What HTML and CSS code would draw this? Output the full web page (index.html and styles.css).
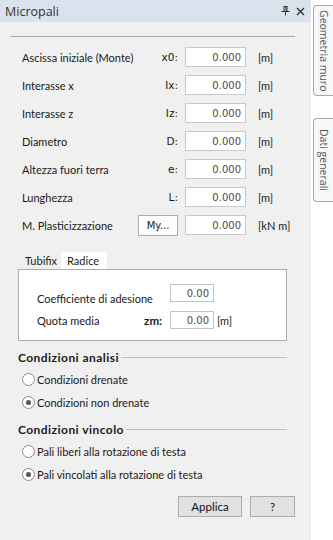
FILE: index.html
```html
<!DOCTYPE html>
<html lang="it">
<head>
    <meta charset="UTF-8">
    <meta name="viewport" content="width=device-width, initial-scale=1.0">
    <title>Micropali</title>
    <link rel="stylesheet" href="styles.css">
</head>
<body>
    <div class="app">
        <div class="panel">
            <div class="titlebar">
                <span class="title">Micropali</span>
                <span class="tb-icons">
                    <!-- puntina -->
                    <svg width="9" height="10" viewBox="0 0 9 10">
                        <path d="M2.5 0.5h4M3 0.5v5M6 0.5v5M5 0.5v5M0.5 5.5h8M4.5 5.5v4" stroke="#333" stroke-width="1" fill="none"/>
                    </svg>
                    <!-- chiudi -->
                    <svg width="9" height="9" viewBox="0 0 9 9">
                        <path d="M1 1L8 8M8 1L1 8" stroke="#333" stroke-width="1.4" fill="none"/>
                    </svg>
                </span>
            </div>
            <div class="body">
                <div class="sep"></div>

                <div class="fields">
                    <span class="lbl">Ascissa iniziale (Monte)</span>
                    <span class="code">x0:</span>
                    <input class="num" type="text" value="0.000" readonly>
                    <span class="unit">[m]</span>

                    <span class="lbl">Interasse x</span>
                    <span class="code">Ix:</span>
                    <input class="num" type="text" value="0.000" readonly>
                    <span class="unit">[m]</span>

                    <span class="lbl">Interasse z</span>
                    <span class="code">Iz:</span>
                    <input class="num" type="text" value="0.000" readonly>
                    <span class="unit">[m]</span>

                    <span class="lbl">Diametro</span>
                    <span class="code">D:</span>
                    <input class="num" type="text" value="0.000" readonly>
                    <span class="unit">[m]</span>

                    <span class="lbl">Altezza fuori terra</span>
                    <span class="code">e:</span>
                    <input class="num" type="text" value="0.000" readonly>
                    <span class="unit">[m]</span>

                    <span class="lbl">Lunghezza</span>
                    <span class="code">L:</span>
                    <input class="num" type="text" value="0.000" readonly>
                    <span class="unit">[m]</span>

                    <span class="lbl">M. Plasticizzazione</span>
                    <span class="code"><button type="button" class="btn-my">My...</button></span>
                    <input class="num" type="text" value="0.000" readonly>
                    <span class="unit">[kN m]</span>
                </div>

                <div class="tabs">
                    <div class="tab-strip">
                        <span class="tab">Tubifix</span>
                        <span class="tab active">Radice</span>
                    </div>
                    <div class="tab-page">
                        <span class="lbl low">Coefficiente di adesione</span>
                        <span class="code"></span>
                        <input class="num small" type="text" value="0.00" readonly>
                        <span class="unit"></span>

                        <span class="lbl">Quota media</span>
                        <span class="code bold">zm:</span>
                        <input class="num small" type="text" value="0.00" readonly>
                        <span class="unit">[m]</span>
                    </div>
                </div>

                <div class="group">
                    <div class="group-title">Condizioni analisi</div>
                    <label class="radio"><span class="dot"></span>Condizioni drenate</label>
                    <label class="radio"><span class="dot on"></span>Condizioni non drenate</label>
                </div>

                <div class="group second">
                    <div class="group-title">Condizioni vincolo</div>
                    <label class="radio"><span class="dot"></span>Pali liberi alla rotazione di testa</label>
                    <label class="radio"><span class="dot on"></span>Pali vincolati alla rotazione di testa</label>
                </div>

                <div class="actions">
                    <button type="button" class="btn btn-apply">Applica</button>
                    <button type="button" class="btn btn-help">?</button>
                </div>
            </div>
        </div>

        <div class="side">
            <div class="vtab vtab-geo">Geometria muro</div>
            <div class="vtab vtab-dati">Dati generali</div>
        </div>
    </div>
</body>
</html>
```

FILE: styles.css
```css
/* Pannello Micropali */
body {
    margin: 0;
    padding: 0;
    font-family: Lato, "Open Sans", sans-serif;
    font-size: 11px;
    color: #1a1a1a;
}

.app {
    display: flex;
    width: 333px;
    height: 540px;
    overflow: hidden;
}

.panel {
    width: 311px;
    background-color: #f0f0f0;
    display: flex;
    flex-direction: column;
}

.titlebar {
    height: 22px;
    background-color: #d9e3ee; /* azzurro chiaro */
    display: flex;
    align-items: center;
    justify-content: space-between;
    padding: 0 6px 0 5px;
}

.title {
    font-family: "Open Sans", sans-serif;
    font-size: 12.5px;
    color: #333;
}

.tb-icons {
    display: flex;
    align-items: center;
    gap: 6px;
}

.body {
    padding: 0 16px 0 0;
}

.sep {
    margin: 14px 0 0 10px;
    width: 285px;
    border-top: 1px solid #a9a9a9;
}

.lbl {
    white-space: nowrap;
}

/* righe principali */
.fields {
    margin-top: 6px;
    padding-left: 22px;
    display: grid;
    grid-template-columns: 116px 47px 73px auto;
    grid-auto-rows: 28px;
    align-items: center;
}

.code {
    text-align: right;
    padding-right: 7px;
    font-family: "DejaVu Sans", sans-serif;
    font-size: 10.5px;
}

.code.bold {
    font-family: Lato, sans-serif;
    font-size: 11.5px;
    font-weight: bold;
}

.num {
    box-sizing: border-box;
    width: 61px;
    height: 20px;
    margin: 0;
    padding: 0 4px 0 0;
    border: 1px solid #c9c9c9;
    background-color: #fff;
    text-align: right;
    font-family: "DejaVu Sans", sans-serif;
    font-size: 10px;
    color: #4a4a4a;
    outline: none;
}

.unit {
    white-space: nowrap;
}

.btn-my {
    box-sizing: border-box;
    width: 40px;
    height: 21px;
    margin: 0;
    padding: 0;
    border: 1px solid #adadad;
    background-color: #fdfdfd;
    font-family: "DejaVu Sans", sans-serif;
    font-size: 10px;
    color: #222;
}

/* schede Tubifix / Radice */
.tabs {
    margin: 13px 0 0 18px;
    width: 269px;
}

.tab-strip {
    display: flex;
    padding-left: 4px;
    height: 17px;
    align-items: flex-end;
}

.tab {
    padding: 0 4px 0 3px;
    height: 16px;
    line-height: 16px;
}

.tab.active {
    background-color: #fff;
    height: 17px;
    line-height: 17px;
    padding: 0 8px 0 6px;
}

.tab-page {
    box-sizing: border-box;
    height: 72px;
    border: 1px solid #adadad;
    background-color: #fff;
    padding: 14px 0 0 18px;
    display: grid;
    grid-template-columns: 95px 30px 55px auto;
    grid-template-rows: 18px 18px;
    row-gap: 9px;
    align-items: center;
}

.tab-page .code {
    padding-right: 0;
}

.tab-page .lbl.low {
    align-self: end;
    margin-bottom: -3px;
}

.num.small {
    width: 44px;
    height: 18px;
    margin-left: 8px;
    border-color: #c4c4c4;
}

/* gruppi di opzioni */
.group {
    margin: 5px 0 0 18px;
    width: 269px;
}

.group.second {
    margin-top: 4px;
}

.group-title {
    height: 22px;
    display: flex;
    align-items: center;
    font-weight: bold;
    font-size: 12px;
    letter-spacing: 0.45px;
}

.group-title::after {
    content: "";
    flex: 1;
    margin-left: 2px;
    border-top: 1px solid #bdbdbd;
}

.radio {
    height: 23px;
    display: flex;
    align-items: center;
    padding-left: 4px;
    white-space: nowrap;
}

.dot {
    box-sizing: border-box;
    width: 13px;
    height: 13px;
    margin-right: 2px;
    border: 1px solid #8a8a8a;
    border-radius: 50%;
    background-color: #fff;
    display: flex;
    align-items: center;
    justify-content: center;
}

.dot.on::before {
    content: "";
    width: 5px;
    height: 5px;
    border-radius: 50%;
    background-color: #555;
}

.actions {
    margin-top: 10px;
    display: flex;
    justify-content: flex-end;
    gap: 8px;
}

.btn {
    box-sizing: border-box;
    height: 21px;
    margin: 0;
    border: 1px solid #adadad;
    background-color: #e1e1e1;
    font-family: Lato, sans-serif;
    font-size: 11.5px;
    color: #111;
    padding: 0;
}

.btn-apply {
    width: 64px;
}

.btn-help {
    width: 45px;
}

/* barra laterale con schede verticali */
.side {
    flex: 1;
    background-color: #fff;
    padding-top: 5px;
    display: flex;
    flex-direction: column;
    align-items: flex-end;
}

.vtab {
    box-sizing: border-box;
    width: 20px;
    writing-mode: vertical-rl;
    white-space: nowrap;
    border: 1px solid #a9a9a9;
    border-right: none;
    border-radius: 4px 0 0 4px;
    background-color: #f7f7f7;
    color: #555;
    font-family: "Open Sans", sans-serif;
    font-size: 10.5px;
    line-height: 18px;
    text-align: center;
}

.vtab-geo {
    height: 91px;
}

.vtab-dati {
    height: 84px;
    margin-top: 22px;
}
```
